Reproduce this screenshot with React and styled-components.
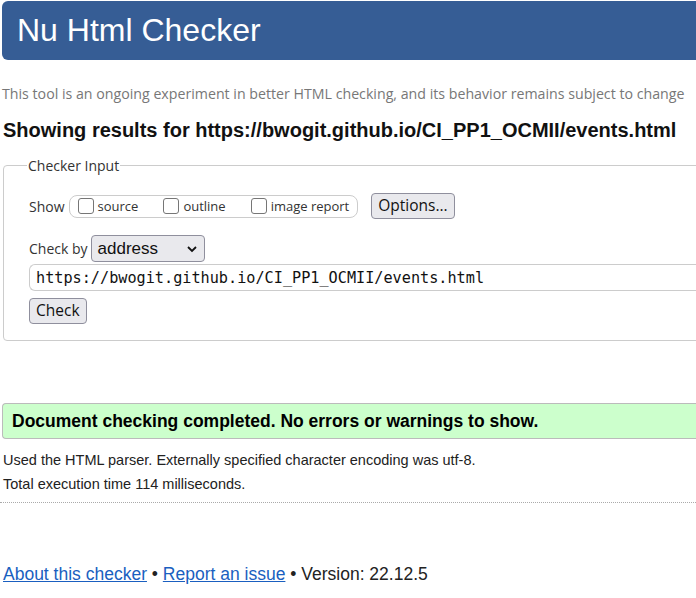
import React from 'react';
import styled, { createGlobalStyle } from 'styled-components';

const GlobalStyle = createGlobalStyle`
  html, body {
    margin: 0;
    padding: 0;
    overflow: hidden;
    background: #fff;
  }
  body {
    font-family: 'Liberation Sans', Arial, sans-serif;
    color: #222;
  }
`;

const Page = styled.div`
  width: 780px;
  padding: 1px 0 0 2px;
`;

const Header = styled.header`
  background: #365d95;
  border-radius: 6px;
  height: 59px;
  display: flex;
  align-items: center;
  padding-left: 15px;
`;

const Title = styled.h1`
  margin: 0;
  color: #fff;
  font-weight: normal;
  font-size: 32px;
  font-family: 'Liberation Sans', Arial, sans-serif;
`;

const Intro = styled.p`
  margin: 24px 0 0;
  font-family: 'Open Sans', sans-serif;
  font-size: 14.2px;
  color: #777;
  line-height: 20px;
`;

const Heading = styled.h2`
  margin: 14px 0 0 1px;
  font-size: 20px;
  line-height: 24px;
  font-weight: bold;
  color: #111;
`;

const Fieldset = styled.fieldset`
  margin: 14px 0 0 1px;
  padding: 6px 0 16px 25px;
  border: 1px solid #ccc;
  border-radius: 4px;
  font-family: 'Open Sans', sans-serif;
  font-size: 14px;
  color: #333;
`;

const Legend = styled.legend`
  padding: 0 1px;
  margin-left: -2px;
  font-size: 14px;
  color: #333;
`;

const Row = styled.div`
  display: flex;
  align-items: center;
  gap: ${({ gap }) => gap || 4}px;
  margin-top: ${({ top }) => top || 0}px;
`;

const Pill = styled.div`
  display: flex;
  align-items: center;
  height: 21px;
  padding: 0 8px;
  border: 1px solid #ccc;
  border-radius: 8px;
  gap: 25px;
`;

const Option = styled.label`
  display: flex;
  align-items: center;
  gap: 4px;
  font-size: 13px;
  color: #333;
`;

const Box = styled.span`
  width: 14px;
  height: 14px;
  border: 1px solid #767676;
  border-radius: 3px;
  background: #fff;
`;

const Button = styled.button`
  font-family: 'Open Sans', sans-serif;
  font-size: 15.5px;
  color: #111;
  background: #e9e9ed;
  border: 1px solid #8f8f9d;
  border-radius: 4px;
  height: 26px;
  padding: 0 6px;
  line-height: 1;
  margin-left: ${({ offset }) => offset || 0}px;
`;

const Select = styled.div`
  display: flex;
  align-items: center;
  justify-content: space-between;
  width: 100px;
  height: 25px;
  padding: 0 6px;
  border: 1px solid #8f8f9d;
  border-radius: 4px;
  background: #e9e9ed;
  font-family: 'Liberation Sans', Arial, sans-serif;
  font-size: 17px;
  color: #111;
`;

const UrlInput = styled.div`
  margin-top: 2px;
  height: 25px;
  display: flex;
  align-items: center;
  padding-left: 6px;
  border: 1px solid #ccc;
  border-right: none;
  border-radius: 6px 0 0 6px;
  font-family: 'DejaVu Sans Mono', monospace;
  font-size: 15.2px;
  color: #111;
`;

const Success = styled.div`
  margin-top: 62px;
  height: 34px;
  display: flex;
  align-items: center;
  padding-left: 9px;
  background: #ccffcc;
  border: 1px solid #bbb;
  border-right: none;
  border-radius: 4px 0 0 4px;
  font-size: 17.5px;
  font-weight: bold;
  color: #000;
`;

const Detail = styled.p`
  margin: ${({ top }) => top}px 0 0 1px;
  font-size: 14.5px;
  line-height: 18px;
  color: #222;
`;

const Rule = styled.hr`
  margin: 9px 0 0 -2px;
  border: none;
  border-top: 1px dotted #aaa;
`;

const Footer = styled.footer`
  margin: 61px 0 0 1px;
  font-size: 17.5px;
  color: #222;
`;

const Link = styled.a`
  color: #1a5fc0;
  text-decoration: underline;
`;

const Chevron = () => (
  <svg width="12" height="8" viewBox="0 0 12 8">
    <path d="M2 2l4 4 4-4" fill="none" stroke="#111" strokeWidth="1.8" />
  </svg>
);

export default function App() {
  return (
    <Page>
      <GlobalStyle />
      <Header>
        <Title>Nu Html Checker</Title>
      </Header>
      <Intro>
        This tool is an ongoing experiment in better HTML checking, and its behavior remains subject to change
      </Intro>
      <Heading>Showing results for https://bwogit.github.io/CI_PP1_OCMII/events.html</Heading>
      <Fieldset>
        <Legend>Checker Input</Legend>
        <Row top={12} gap={4}>
          <span>Show</span>
          <Pill>
            <Option><Box />source</Option>
            <Option><Box />outline</Option>
            <Option><Box />image report</Option>
          </Pill>
          <Button offset={9}>Options...</Button>
        </Row>
        <Row top={16} gap={3}>
          <span>Check by</span>
          <Select>
            address
            <Chevron />
          </Select>
        </Row>
        <UrlInput>https://bwogit.github.io/CI_PP1_OCMII/events.html</UrlInput>
        <Row top={7}>
          <Button>Check</Button>
        </Row>
      </Fieldset>
      <Success>Document checking completed. No errors or warnings to show.</Success>
      <Detail top={12}>Used the HTML parser. Externally specified character encoding was utf-8.</Detail>
      <Detail top={6}>Total execution time 114 milliseconds.</Detail>
      <Rule />
      <Footer>
        <Link href="#">About this checker</Link> • <Link href="#">Report an issue</Link> • Version: 22.12.5
      </Footer>
    </Page>
  );
}
